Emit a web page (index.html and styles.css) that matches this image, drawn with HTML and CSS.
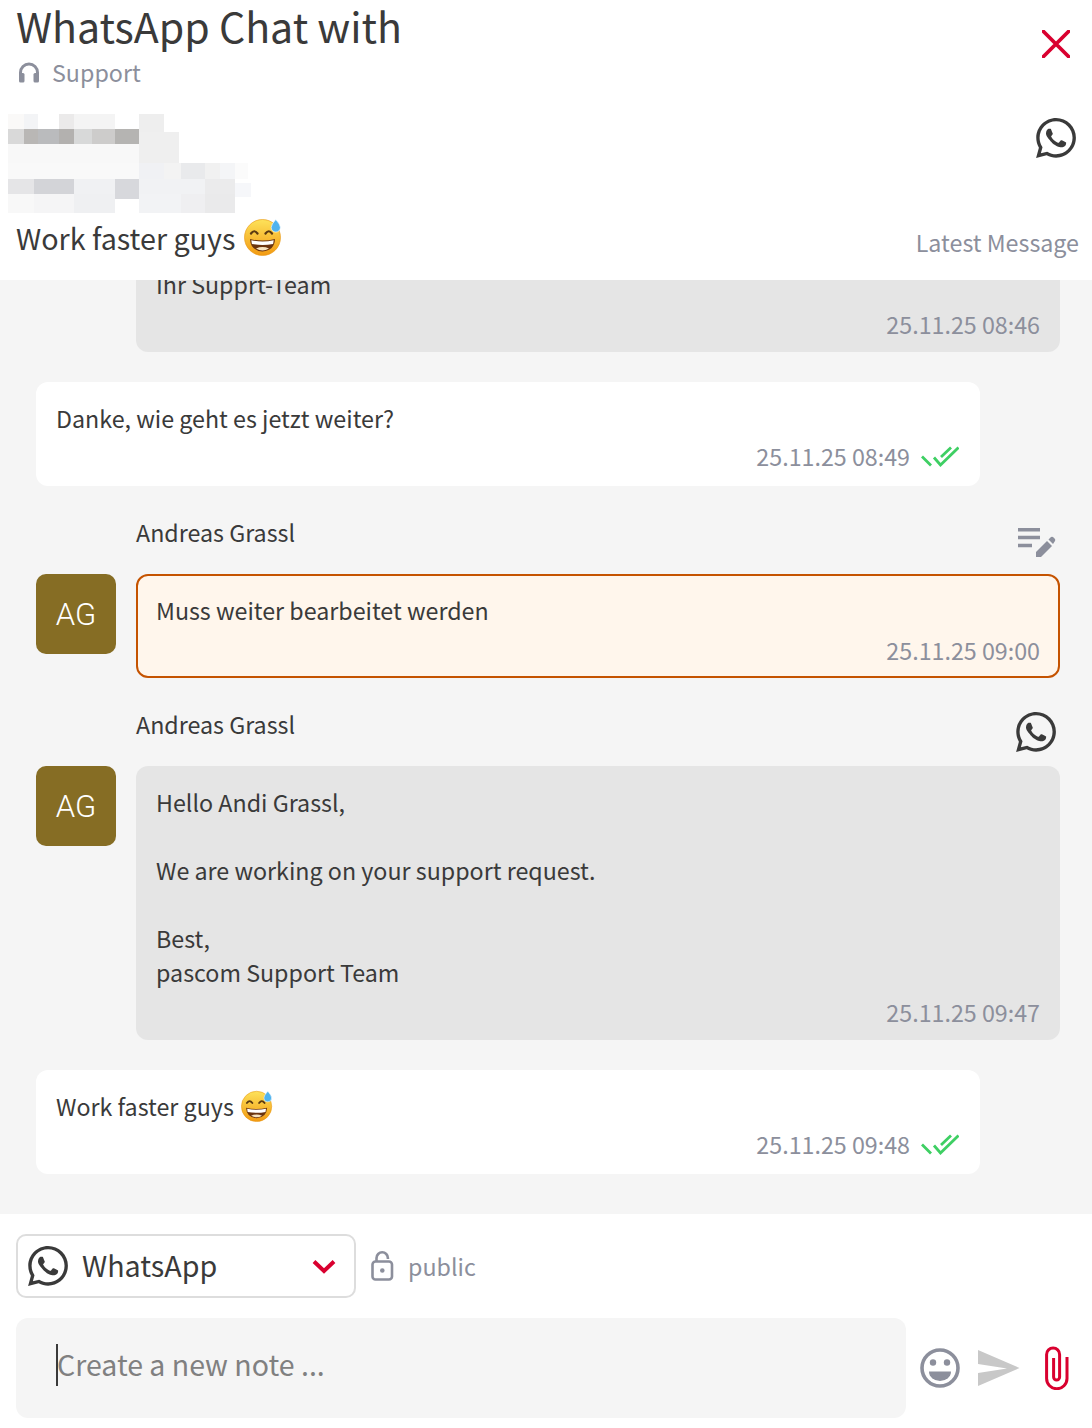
FILE: index.html
```html
<!DOCTYPE html>
<html lang="en">
<head>
<meta charset="utf-8">
<title>WhatsApp Chat</title>
<link rel="stylesheet" href="styles.css">
</head>
<body>
<svg class="defs" aria-hidden="true">
  <defs>
    <symbol id="wa" viewBox="2 2 20 20">
      <path d="M12.04 2C6.58 2 2.13 6.45 2.13 11.91C2.13 13.66 2.59 15.36 3.45 16.86L2.05 22L7.3 20.62C8.75 21.41 10.38 21.83 12.04 21.83C17.5 21.83 21.95 17.38 21.95 11.92C21.95 9.27 20.92 6.78 19.05 4.91C17.18 3.03 14.69 2 12.04 2M12.05 3.67C14.25 3.67 16.31 4.53 17.87 6.09C19.42 7.65 20.28 9.72 20.28 11.92C20.28 16.46 16.58 20.15 12.04 20.15C10.56 20.15 9.11 19.76 7.85 19L7.55 18.83L4.43 19.65L5.26 16.61L5.06 16.29C4.24 15 3.8 13.47 3.8 11.91C3.81 7.37 7.5 3.67 12.05 3.67M8.53 7.33C8.37 7.33 8.1 7.39 7.87 7.64C7.65 7.89 7 8.5 7 9.71C7 10.93 8.5 12.6 8.6 12.77C8.74 12.94 10.2 15 12.25 16C12.84 16.27 13.3 16.42 13.66 16.53C14.25 16.72 14.79 16.69 15.22 16.63C15.7 16.56 16.68 16.03 16.89 15.45C17.1 14.87 17.1 14.38 17.04 14.27C16.97 14.17 16.81 14.11 16.56 14C16.31 13.86 15.09 13.26 14.87 13.18C14.64 13.1 14.5 13.06 14.31 13.3C14.15 13.55 13.67 14.11 13.53 14.27C13.38 14.44 13.24 14.46 13 14.34C12.74 14.21 11.94 13.95 11 13.11C10.26 12.45 9.77 11.64 9.62 11.39C9.5 11.15 9.61 11 9.73 10.89C9.84 10.78 10 10.6 10.1 10.45C10.23 10.31 10.27 10.2 10.35 10.04C10.43 9.87 10.39 9.73 10.33 9.61C10.27 9.5 9.77 8.26 9.56 7.77C9.36 7.29 9.16 7.35 9 7.34C8.86 7.34 8.7 7.33 8.53 7.33Z" fill="#3a3a3a"/>
    </symbol>
    <linearGradient id="face" x1="0" y1="0" x2="0" y2="1">
      <stop offset="0" stop-color="#fde25a"/>
      <stop offset="1" stop-color="#f29a12"/>
    </linearGradient>
    <symbol id="emoji" viewBox="0 0 38 38">
      <circle cx="18.500" cy="19.500" r="18" fill="url(#face)" stroke="#e8930f" stroke-width=".6"/>
      <path d="M7 15.500q3.200-4.500 6.500 0M21.500 15.500q3.300-4.500 6.500 0" fill="none" stroke="#5b3a12" stroke-width="2.200" stroke-linecap="round"/>
      <path d="M6 21q12.500 3.200 25 0q-.5 11.500-12.500 12.500q-12-1-12.500-12.500z" fill="#6b3410"/>
      <path d="M7.300 22.200q11.200 2.600 22.400 0l-.6 3.800q-10.600 2-21.200 0z" fill="#fff"/>
      <path d="M12 30.500q6.500-2.800 13 0q-6.500 3.800-13 0z" fill="#f7e3c0"/>
      <path d="M31.800 1.500q-4.600 5-4.600 8a4.600 4.600 0 0 0 9.200 0q0-3-4.600-8z" fill="#4fb3ee" stroke="#fff" stroke-width=".6"/>
    </symbol>
    <symbol id="ticks" viewBox="0 0 38 21">
      <path d="M1 10.500L10 19.500M13 11.500L19.500 19L37.500 1.500M20 11L30 1.500" fill="none" stroke="#3ecf63" stroke-width="2.800"/>
    </symbol>
  </defs>
</svg>

<div class="app">
  <header class="head">
    <div class="head-top">
      <div>
        <h1 class="title">WhatsApp Chat with</h1>
        <div class="sub">
          <svg class="ico-phones" viewBox="0 0 22 21"><path d="M2.500 14V10.500a8.500 8.500 0 0 1 17 0V14" fill="none" stroke="#8c8f9c" stroke-width="3"/><rect x="1" y="11" width="5.500" height="9.500" rx="1.500" fill="#8c8f9c"/><rect x="15.500" y="11" width="5.500" height="9.500" rx="1.500" fill="#8c8f9c"/></svg>
          <span>Support</span>
        </div>
      </div>
      <svg class="ico-close" viewBox="0 0 28 28"><path d="M1.500 1.500L26.500 26.500M26.500 1.500L1.500 26.500" stroke="#d9002f" stroke-width="3.800" stroke-linecap="round"/></svg>
    </div>
    <div class="head-mid">
      <svg class="blur" viewBox="8 114 244 99" shape-rendering="crispEdges">
        <rect x="8" y="114" width="16" height="15" fill="#faf9f8"/><rect x="24" y="114" width="14" height="15" fill="#f3f4f6"/><rect x="59" y="114" width="15" height="15" fill="#ebeaea"/><rect x="74" y="114" width="41" height="15" fill="#f4f4f4"/><rect x="139" y="114" width="25" height="18" fill="#eee"/>
        <rect x="8" y="129" width="16" height="15" fill="#d9d9d9"/><rect x="24" y="129" width="14" height="15" fill="#b9b7b5"/><rect x="38" y="129" width="21" height="15" fill="#babbbd"/><rect x="59" y="129" width="15" height="15" fill="#b3b1af"/><rect x="74" y="129" width="18" height="15" fill="#d8d9d9"/><rect x="92" y="129" width="23" height="15" fill="#cdcccb"/><rect x="115" y="129" width="24" height="15" fill="#b5b4b2"/><rect x="139" y="132" width="40" height="31" fill="#efefef"/>
        <rect x="8" y="144" width="131" height="19" fill="#f8f8f8"/>
        <rect x="8" y="163" width="131" height="16" fill="#f9f9f9"/><rect x="139" y="163" width="25" height="16" fill="#f0f1f4"/><rect x="164" y="163" width="17" height="16" fill="#f3f3f3"/><rect x="181" y="163" width="24" height="16" fill="#e9eaec"/><rect x="205" y="163" width="15" height="16" fill="#f1f1f1"/><rect x="220" y="163" width="15" height="16" fill="#f4f5f7"/><rect x="235" y="163" width="13" height="16" fill="#fbfbfb"/>
        <rect x="8" y="179" width="26" height="15" fill="#e5e5e7"/><rect x="34" y="179" width="40" height="15" fill="#d3d4d8"/><rect x="74" y="179" width="41" height="15" fill="#f0f1f3"/><rect x="115" y="179" width="24" height="20" fill="#d7d8dc"/><rect x="139" y="179" width="66" height="15" fill="#f1f2f4"/><rect x="205" y="179" width="30" height="15" fill="#ebebec"/><rect x="235" y="183" width="16" height="14" fill="#f6f7fa"/>
        <rect x="8" y="194" width="26" height="19" fill="#f8f8f8"/><rect x="34" y="194" width="40" height="19" fill="#f5f5f6"/><rect x="74" y="194" width="41" height="19" fill="#eff0f2"/><rect x="139" y="194" width="42" height="19" fill="#f2f3f5"/><rect x="181" y="194" width="24" height="19" fill="#efeff1"/><rect x="205" y="194" width="30" height="19" fill="#eaeaeb"/>
      </svg>
      <svg class="ico-wa head-wa"><use href="#wa"/></svg>
    </div>
    <div class="head-bottom">
      <div class="latest-text">Work faster guys <svg class="emoji-lg"><use href="#emoji"/></svg></div>
      <div class="latest-label">Latest Message</div>
    </div>
  </header>

  <main class="chat">
    <article class="msg msg-agent">
      <div class="bubble bubble-grey">
        <p class="line">Ihr Supprt-Team</p>
        <div class="time">25.11.25 08:46</div>
      </div>
    </article>

    <article class="msg msg-customer">
      <div class="bubble bubble-white">
        <p class="line">Danke, wie geht es jetzt weiter?</p>
        <div class="time">25.11.25 08:49 <svg class="ticks"><use href="#ticks"/></svg></div>
      </div>
    </article>

    <article class="msg msg-agent">
      <div class="sender">
        <span>Andreas Grassl</span>
        <svg class="ico-note" viewBox="0 0 40 32"><path d="M2 3.800H24M2 11.500H24M2 19.500H16" stroke="#8c8f9c" stroke-width="3.400"/><path d="M20 31V26L31 15L36 20L25 31Z" fill="#8c8f9c"/><path d="M32.500 13.500L35 11Q36 10.500 37 11L39 13Q39.500 14 39 15L37 18Z" fill="#8c8f9c"/></svg>
      </div>
      <div class="row">
        <div class="avatar">AG</div>
        <div class="bubble bubble-note">
          <p class="line">Muss weiter bearbeitet werden</p>
          <div class="time">25.11.25 09:00</div>
        </div>
      </div>
    </article>

    <article class="msg msg-agent">
      <div class="sender">
        <span>Andreas Grassl</span>
        <svg class="ico-wa"><use href="#wa"/></svg>
      </div>
      <div class="row">
        <div class="avatar">AG</div>
        <div class="bubble bubble-grey">
          <p class="line">Hello Andi Grassl,</p>
          <p class="line">&nbsp;</p>
          <p class="line">We are working on your support request.</p>
          <p class="line">&nbsp;</p>
          <p class="line">Best,</p>
          <p class="line">pascom Support Team</p>
          <div class="time">25.11.25 09:47</div>
        </div>
      </div>
    </article>

    <article class="msg msg-customer">
      <div class="bubble bubble-white">
        <p class="line">Work faster guys<svg class="emoji-sm"><use href="#emoji"/></svg></p>
        <div class="time">25.11.25 09:48 <svg class="ticks"><use href="#ticks"/></svg></div>
      </div>
    </article>
  </main>

  <footer class="foot">
    <div class="foot-row">
      <div class="select">
        <svg class="ico-wa"><use href="#wa"/></svg>
        <span class="select-label">WhatsApp</span>
        <svg class="ico-chev" viewBox="0 0 24 15"><path d="M2 2.500L12 12L22 2.500" fill="none" stroke="#d9002f" stroke-width="4"/></svg>
      </div>
      <div class="vis">
        <svg class="ico-lock" viewBox="0 0 23 30"><rect x="1.500" y="10.500" width="19.500" height="18" rx="3" fill="none" stroke="#8c8f9c" stroke-width="2.600"/><path d="M5.500 10.500V7a5.700 5.700 0 0 1 11.400 0v1" fill="none" stroke="#8c8f9c" stroke-width="2.600"/><circle cx="11.300" cy="19.500" r="2.300" fill="#8c8f9c"/></svg>
        <span>public</span>
      </div>
    </div>
    <div class="compose">
      <div class="input"><span class="placeholder">Create a new note ...</span></div>
      <svg class="ico-smile" viewBox="0 0 40 40"><circle cx="20" cy="20" r="18" fill="none" stroke="#8c8f9c" stroke-width="3.600"/><circle cx="13" cy="14.500" r="3.200" fill="#8c8f9c"/><circle cx="27" cy="14.500" r="3.200" fill="#8c8f9c"/><path d="M9 23.500H31a11 9.500 0 0 1 -22 0z" fill="#8c8f9c"/></svg>
      <svg class="ico-send" viewBox="0 0 42 36"><path d="M0 0L41.500 18L0 36V23L29 18.500L0 14z" fill="#c8c8c8"/></svg>
      <svg class="ico-clip" viewBox="0 0 24 44"><path d="M22 11V32.500a10.200 10.200 0 0 1 -20.400 0V8.500a6.500 6.500 0 0 1 13 0V31a3 3 0 0 1 -6 0V12" fill="none" stroke="#d9002f" stroke-width="3"/></svg>
    </div>
  </footer>
</div>
</body>
</html>
```

FILE: styles.css
```css
* { box-sizing: border-box; }
html, body { margin: 0; padding: 0; }
body {
  font-family: "Noto Sans CJK SC", "Noto Sans", sans-serif;
  color: #3a3a3a;
  background: #fff;
}
.defs { position: absolute; width: 0; height: 0; }
.app { width: 1092px; height: 1428px; display: flex; flex-direction: column; overflow: hidden; }

/* header */
.head { height: 280px; flex: none; background: #fff; padding: 0 12px 0 16px; position: relative; z-index: 1; }
.head-top { display: flex; justify-content: space-between; align-items: flex-start; height: 114px; padding-right: 10px; }
.title { margin: 0; font-size: 41.1px; font-weight: 400; line-height: 50px; }
.sub { display: flex; align-items: center; gap: 12px; font-size: 23.25px; line-height: 34px; color: #8c8f9c; margin-top: 5px; }
.ico-phones { width: 22px; height: 21px; margin-left: 2px; }
.ico-close { width: 28px; height: 28px; margin-top: 30px; }
.head-mid { display: flex; justify-content: space-between; align-items: flex-start; height: 99px; margin-left: -8px; padding-right: 4px; }
.blur { width: 244px; height: 99px; display: block; }
.ico-wa { width: 40px; height: 40px; flex: none; display: block; }
.head-wa { margin-top: 4px; }
.head-bottom { display: flex; justify-content: space-between; align-items: center; height: 52px; padding-right: 1px; }
.latest-text { display: flex; align-items: center; gap: 9px; font-size: 28.7px; line-height: 50px; padding-bottom: 2px; }
.emoji-lg { width: 38px; height: 38px; margin-top: -2px; }
.latest-label { font-size: 23.25px; line-height: 34px; color: #8c8f9c; margin-top: 6px; }

/* chat */
.chat { flex: 1; min-height: 0; overflow: hidden; background: #f5f5f5; display: flex; flex-direction: column; justify-content: flex-end; gap: 30px; padding: 0 32px 40px 36px; }
.msg { flex: none; }
.msg-agent > .bubble { margin-left: 100px; }
.msg-customer { padding-right: 80px; }
.sender { display: flex; justify-content: space-between; align-items: flex-start; height: 58px; padding: 0 4px 0 100px; font-size: 23.25px; line-height: 32px; }
.sender svg { margin-top: 4px; }
.sender .ico-note { width: 40px; height: 32px; margin-top: 10px; }
.row { display: flex; gap: 20px; align-items: flex-start; }
.avatar { width: 80px; height: 80px; flex: none; border-radius: 10px; background: #866d24; color: #fff; font-family: "Roboto", sans-serif; font-size: 31px; font-weight: 300; display: flex; align-items: center; justify-content: center; }
.bubble { border-radius: 12px; padding: 20px 20px 11px; font-size: 23.25px; line-height: 34px; flex: 1; min-width: 0; }
.bubble-grey { background: #e5e5e5; }
.bubble-white { background: #fff; padding: 20px 21px 13px 20px; }
.bubble-note { background: #fff6ec; border: 2px solid #c55300; padding: 18px 18px 9px; }
.line { margin: 0; height: 34px; padding-bottom: 2px; display: flex; align-items: center; gap: 7px; white-space: nowrap; }
.time { display: flex; justify-content: flex-end; align-items: center; gap: 11px; color: #8c8f9c; margin-top: 5px; }
.bubble-white .time { margin-top: 3px; }
.ticks { width: 38px; height: 21px; }
.emoji-sm { width: 32px; height: 32px; }

/* footer */
.foot { height: 214px; flex: none; background: #fff; padding: 20px 16px 0; }
.foot-row { display: flex; align-items: center; gap: 15px; height: 64px; }
.select { width: 340px; height: 64px; border: 2px solid #ddd; border-radius: 10px; display: flex; align-items: center; padding: 0 18px 0 10px; }
.select-label { font-size: 28.7px; line-height: 40px; margin-left: 14px; padding-bottom: 2px; flex: 1; }
.ico-chev { width: 24px; height: 15px; }
.vis { display: flex; align-items: center; gap: 14px; font-size: 23.25px; color: #8c8f9c; }
.ico-lock { width: 23px; height: 30px; }
.compose { display: flex; align-items: center; margin-top: 20px; height: 100px; }
.input { width: 890px; height: 100px; background: #f5f5f5; border-radius: 12px; padding: 26px 40px; flex: none; }
.placeholder { display: block; border-left: 2px solid #3a3a3a; height: 42px; font-size: 28.5px; line-height: 40px; color: #808080; white-space: nowrap; text-indent: -1px; }
.ico-smile { width: 40px; height: 40px; margin-left: 14px; }
.ico-send { width: 42px; height: 36px; margin-left: 18px; }
.ico-clip { width: 24px; height: 44px; margin-left: 25px; }
```
